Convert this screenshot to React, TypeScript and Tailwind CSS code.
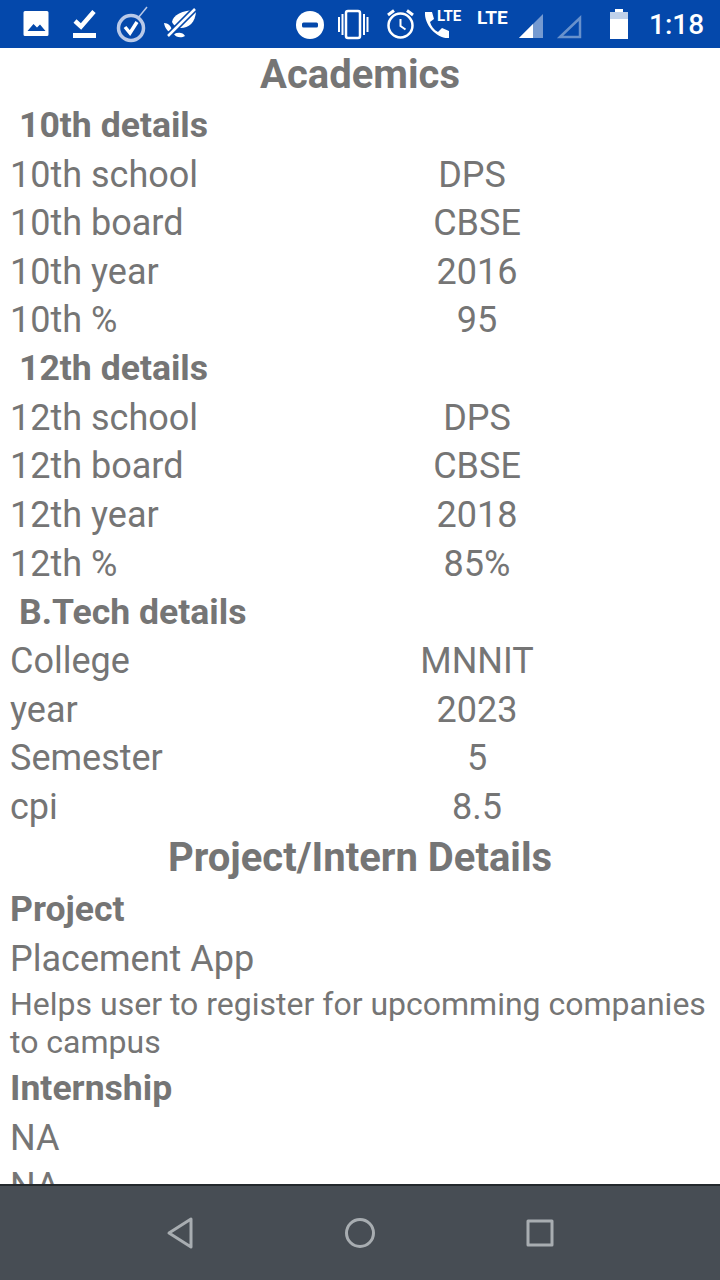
const Row = ({ k, v, shift }: { k: string; v: string; shift?: boolean }) => (
  <div className="flex h-[48.65px] items-center pl-[10px] text-[36px]">
    <div className="w-[228px] whitespace-nowrap">{k}</div>
    <div className={shift ? "w-[478px] text-center pr-[10px]" : "w-[478px] text-center"}>{v}</div>
  </div>
);

const Head = ({ t, left }: { t: string; left: string }) => (
  <div className={`flex h-[48.65px] items-center text-[35.6px] font-bold ${left}`}>{t}</div>
);

const StatusBar = () => (
  <div className="flex h-[48px] shrink-0 items-center bg-[#0448ab] text-white">
    <svg width="720" height="48" viewBox="0 0 720 48" fill="none">
      <path d="M25 11h22a1.500 1.500 0 0 1 1.500 1.500v22a1.500 1.500 0 0 1-1.500 1.500H25a1.500 1.500 0 0 1-1.500-1.500v-22A1.500 1.500 0 0 1 25 11z" fill="#fff" />
      <path d="M27.500 31l6-7 3.500 3.500 3-3 5.500 6.500z" fill="#0448ab" />
      <path d="M75 21l6 5.500 13-15" stroke="#fff" strokeWidth="4.500" />
      <rect x="73" y="33" width="23" height="5" fill="#fff" />
      <circle cx="131" cy="28" r="12.500" stroke="#b9c9e8" strokeWidth="3.500" />
      <path d="M125 27l5 6 7-11" stroke="#fff" strokeWidth="3.500" />
      <path d="M138 18l9-11" stroke="#b9c9e8" strokeWidth="1.500" />
      <path d="M172 22c1-7 10-12 24-12 0 13-8 18-15 18-3 0-7-2-9-6z" fill="#fff" />
      <path d="M164 23c4 0 8 3 8 9-3 1-7-3-8-9zM174 34c4-2 9-2 11 2-3 2-9 2-11-2z" fill="#fff" />
      <path d="M167 37l28-28" stroke="#0448ab" strokeWidth="6" />
      <path d="M168 36l27-27" stroke="#fff" strokeWidth="2.500" />
      <circle cx="310" cy="25" r="14" fill="#fff" />
      <rect x="302" y="22.500" width="16" height="5" rx="1.500" fill="#0448ab" />
      <rect x="346" y="11" width="14" height="27" rx="2" stroke="#fff" strokeWidth="2.500" />
      <path d="M339 17v15M342.500 14v21M364 14v21M367.500 17v15" stroke="#fff" strokeWidth="2" />
      <circle cx="400.500" cy="25.500" r="12" stroke="#fff" strokeWidth="2.500" />
      <path d="M400.500 19v7l5 3.500" stroke="#fff" strokeWidth="2" />
      <path d="M388 15l6-4.500M413 15l-6-4.500" stroke="#fff" strokeWidth="3" />
      <path d="M425 12h7l2 7-4 3c1 4 4 8 8 10l4-4 7 3v7c-12 1-25-13-24-26z" fill="#fff" />
      <path d="M519 38l24-24v24z" fill="#fff" fillOpacity="0.45" />
      <path d="M519 38l14-14v14z" fill="#fff" />
      <path d="M560 37l20-19v19z" stroke="#fff" strokeOpacity="0.4" strokeWidth="2.500" />
      <path d="M615 9h8v3h5v27h-18V12h5z" fill="#fff" />
      <path d="M610 12h18v7h-18z" fill="#0448ab" fillOpacity="0.25" />
    </svg>
    <div className="absolute left-[437px] top-[7px] text-[15px] font-bold leading-[18px]">LTE</div>
    <div className="absolute left-[477px] top-[7px] text-[19px] font-bold leading-[22px]">LTE</div>
    <div className="absolute left-[649px] top-[8px] text-[28px] font-medium leading-[34px]">1:18</div>
  </div>
);

const NavBar = () => (
  <div className="flex h-[96px] shrink-0 items-center justify-center border-t-2 border-[#23282c] bg-[#474d54]">
    <div className="flex w-[180px] justify-center">
      <svg width="30" height="34" viewBox="0 0 30 34" fill="none" stroke="#a8adb1" strokeWidth="3" strokeLinejoin="round">
        <path d="M26 3v28L4 17z" />
      </svg>
    </div>
    <div className="flex w-[180px] justify-center">
      <svg width="30" height="30" viewBox="0 0 30 30" fill="none" stroke="#a8adb1" strokeWidth="3">
        <circle cx="15" cy="15" r="13.500" />
      </svg>
    </div>
    <div className="flex w-[180px] justify-center">
      <svg width="28" height="28" viewBox="0 0 28 28" fill="none" stroke="#a8adb1" strokeWidth="3" strokeLinejoin="round">
        <rect x="2" y="2" width="24" height="24" />
      </svg>
    </div>
  </div>
);

export default function App() {
  return (
    <div className="relative flex h-[1280px] w-[720px] flex-col overflow-hidden bg-white text-[#757575] [font-family:Roboto,sans-serif]">
      <StatusBar />
      <div className="min-h-0 flex-1 overflow-hidden">
        <div className="flex h-[53.6px] items-center justify-center text-[40px] font-bold">Academics</div>
        <Head t="10th details" left="pl-[19px]" />
        <Row k="10th school" v="DPS" shift />
        <Row k="10th board" v="CBSE" />
        <Row k="10th year" v="2016" />
        <Row k="10th %" v="95" />
        <Head t="12th details" left="pl-[19px]" />
        <Row k="12th school" v="DPS" />
        <Row k="12th board" v="CBSE" />
        <Row k="12th year" v="2018" />
        <Row k="12th %" v="85%" />
        <Head t="B.Tech details" left="pl-[19px]" />
        <Row k="College" v="MNNIT" />
        <Row k="year" v="2023" />
        <Row k="Semester" v="5" />
        <Row k="cpi" v="8.5" />
        <div className="flex h-[54px] items-center justify-center text-[40px] font-bold">Project/Intern Details</div>
        <div className="flex h-[49.4px] items-center pl-[10px] text-[35.6px] font-bold">Project</div>
        <div className="flex h-[48px] items-center pl-[10px] text-[36px]">Placement App</div>
        <div className="pl-[10px] pr-[10px] pt-[2px] pb-[3px] text-[32px] leading-[38px]">Helps user to register for upcomming companies to campus</div>
        <div className="flex h-[50px] items-center pl-[10px] text-[35.6px] font-bold">Internship</div>
        <div className="flex h-[48px] items-center pl-[10px] text-[36px]">NA</div>
        <div className="flex h-[48px] items-center pl-[10px] text-[36px]">NA</div>
      </div>
      <NavBar />
    </div>
  );
}
